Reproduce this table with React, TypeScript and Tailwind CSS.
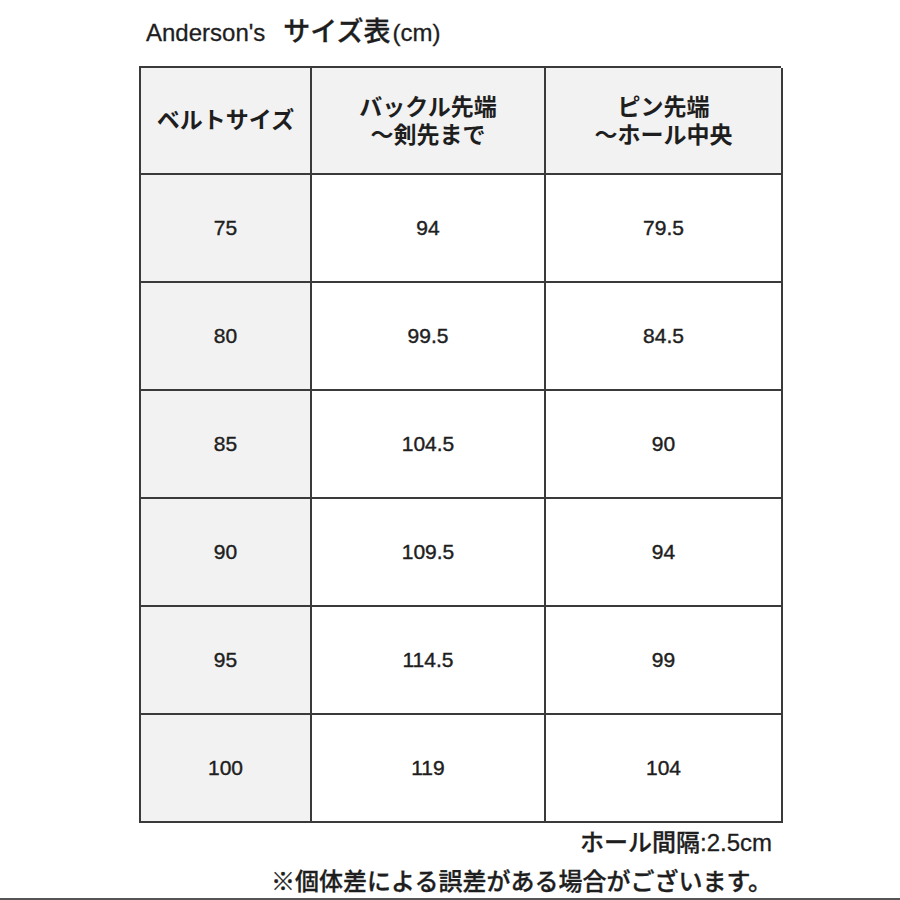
const rows = [
  ['75', '94', '79.5'],
  ['80', '99.5', '84.5'],
  ['85', '104.5', '90'],
  ['90', '109.5', '94'],
  ['95', '114.5', '99'],
  ['100', '119', '104'],
];

const font = { fontFamily: '"Liberation Sans", "Noto Sans CJK JP", sans-serif' };

export default function App() {
  return (
    <div className="w-[900px] h-[900px] bg-white text-[#1e1e1e] relative overflow-hidden" style={font}>
      <div className="pl-[146px] pt-[16px] h-[66px] flex items-baseline text-[24px] leading-[32px] font-medium [-webkit-text-stroke:0.3px]">
        <span>Anderson's</span>
        <span className="ml-[18px] text-[27px]">サイズ表</span>
        <span className="ml-[2px]">(cm)</span>
      </div>

      <div className="ml-[139px] w-[642px] border-t-2 border-l-2 border-[#3a3a3a] grid grid-cols-[171px_234px_237px]">
        <div className="h-[107px] bg-[#f2f2f2] border-r-2 border-b-2 border-[#3a3a3a] flex items-center justify-center font-bold text-[23px]">
          ベルトサイズ
        </div>
        <div className="h-[107px] bg-[#f2f2f2] border-r-2 border-b-2 border-[#3a3a3a] flex flex-col items-center justify-center font-bold text-[23px] leading-[28px]">
          <span>バックル先端</span>
          <span>～剣先まで</span>
        </div>
        <div className="h-[107px] bg-[#f2f2f2] border-r-2 border-b-2 border-[#3a3a3a] flex flex-col items-center justify-center font-bold text-[23px] leading-[28px]">
          <span>ピン先端</span>
          <span>～ホール中央</span>
        </div>
        {rows.map((r, i) => (
          <div key={i} className="contents">
            <div className="h-[108px] bg-[#f2f2f2] border-r-2 border-b-2 border-[#3a3a3a] flex items-center justify-center text-[21px] [-webkit-text-stroke:0.4px]">
              {r[0]}
            </div>
            <div className="h-[108px] bg-white border-r-2 border-b-2 border-[#3a3a3a] flex items-center justify-center text-[21px] [-webkit-text-stroke:0.4px]">
              {r[1]}
            </div>
            <div className="h-[108px] bg-white border-r-2 border-b-2 border-[#3a3a3a] flex items-center justify-center text-[21px] [-webkit-text-stroke:0.4px]">
              {r[2]}
            </div>
          </div>
        ))}
      </div>

      <div className="w-[772px] text-right text-[24px] leading-[30px] mt-[5px] font-medium [-webkit-text-stroke:0.3px]">ホール間隔:2.5cm</div>
      <div className="w-[772px] text-right text-[24px] leading-[30px] mt-[9px] font-medium [-webkit-text-stroke:0.3px]">※個体差による誤差がある場合がございます。</div>
      <div className="absolute left-0 right-0 bottom-0 h-[2px] bg-[#555]" />
    </div>
  );
}
